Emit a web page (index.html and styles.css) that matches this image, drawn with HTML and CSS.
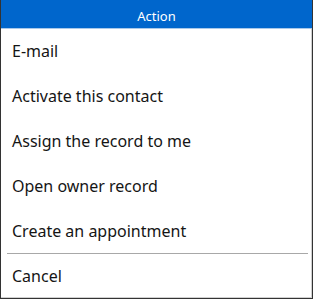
FILE: index.html
```html
<!DOCTYPE html>
<html>
<head>
    <meta charset="UTF-8" />
    <title>Action</title>
    <link rel="stylesheet" href="styles.css">
</head>
<body>
    <div class="dialog">
        <header class="dialog-title">Action</header>
        <ul class="action-list">
            <li>E-mail</li>
            <li>Activate this contact</li>
            <li>Assign the record to me</li>
            <li>Open owner record</li>
            <li class="last">Create an appointment</li>
        </ul>
        <div class="cancel">Cancel</div>
    </div>
</body>
</html>
```

FILE: styles.css
```css
:root {
    --blue: #0066cc;
    --text: #151515;
}

body {
    margin: 0;
    font-family: 'Noto Sans', sans-serif;
    color: var(--text);
    background: #fff;
}

.dialog {
    width: 313px;
    height: 299px;
    box-sizing: border-box;
    border: 1px solid #333;
    border-top: none;
    box-shadow: inset -1px -1px 0 #d0d0d0;
    display: flex;
    flex-direction: column;
}

.dialog-title {
    height: 29px;
    box-sizing: border-box;
    padding-top: 3px;
    line-height: 26px;
    background: var(--blue);
    color: #fff;
    text-align: center;
    font-size: 13px;
    border-bottom: 1px solid #a9c9ea;
}

.action-list {
    list-style: none;
    margin: 0;
    padding: 0;
}

.action-list li,
.cancel {
    height: 45px;
    line-height: 45px;
    padding-left: 11px;
    font-size: 16px;
}

/* divider above Cancel stops short of both edges */
.action-list li.last {
    border-bottom: 1px solid #a8a8a8;
    margin: 0 4px 0 6px;
    padding-left: 5px;
    height: 44px;
}
```
